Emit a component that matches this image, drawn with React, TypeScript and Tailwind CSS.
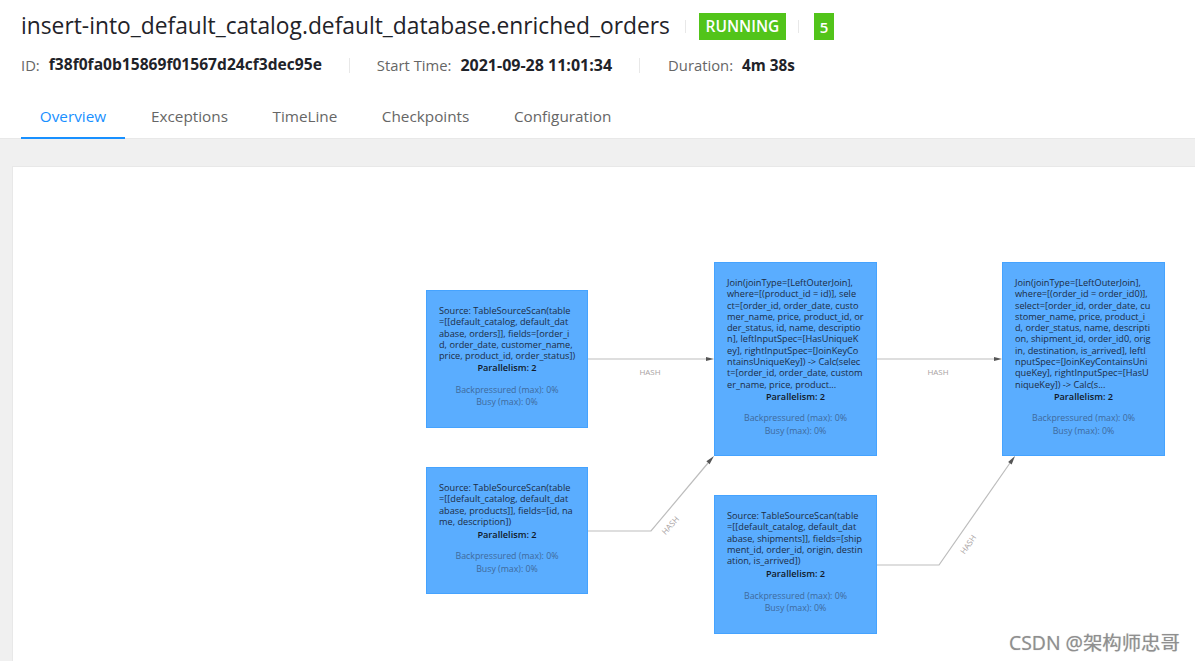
const font = { fontFamily: '"Open Sans", "Noto Sans CJK SC", sans-serif' };

type GraphNode = {
  left: number;
  top: number;
  width: number;
  height: number;
  extra: number;
  lines: string[];
};

// page coords minus canvas origin (13, 167)
const nodes: GraphNode[] = [
  {
    left: 413,
    top: 123,
    width: 162,
    height: 138,
    extra: 1,
    lines: [
      "Source: TableSourceScan(table",
      "=[[default_catalog, default_dat",
      "abase, orders]], fields=[order_i",
      "d, order_date, customer_name,",
      "price, product_id, order_status])",
    ],
  },
  {
    left: 413,
    top: 300,
    width: 162,
    height: 127,
    extra: 2,
    lines: [
      "Source: TableSourceScan(table",
      "=[[default_catalog, default_dat",
      "abase, products]], fields=[id, na",
      "me, description])",
    ],
  },
  {
    left: 701,
    top: 95,
    width: 163,
    height: 194,
    extra: 1,
    lines: [
      "Join(joinType=[LeftOuterJoin],",
      "where=[(product_id = id)], sele",
      "ct=[order_id, order_date, custo",
      "mer_name, price, product_id, or",
      "der_status, id, name, descriptio",
      "n], leftInputSpec=[HasUniqueK",
      "ey], rightInputSpec=[JoinKeyCo",
      "ntainsUniqueKey]) -> Calc(selec",
      "t=[order_id, order_date, custom",
      "er_name, price, product...",
    ],
  },
  {
    left: 701,
    top: 328,
    width: 163,
    height: 139,
    extra: 2,
    lines: [
      "Source: TableSourceScan(table",
      "=[[default_catalog, default_dat",
      "abase, shipments]], fields=[ship",
      "ment_id, order_id, origin, destin",
      "ation, is_arrived])",
    ],
  },
  {
    left: 989,
    top: 95,
    width: 163,
    height: 194,
    extra: 1,
    lines: [
      "Join(joinType=[LeftOuterJoin],",
      "where=[(order_id = order_id0)],",
      "select=[order_id, order_date, cu",
      "stomer_name, price, product_i",
      "d, order_status, name, descripti",
      "on, shipment_id, order_id0, orig",
      "in, destination, is_arrived], leftI",
      "nputSpec=[JoinKeyContainsUni",
      "queKey], rightInputSpec=[HasU",
      "niqueKey]) -> Calc(s...",
    ],
  },
];

function Node({ node }: { node: GraphNode }) {
  return (
    <div
      className="absolute border border-[#45a3ff] bg-[#5aadff] px-3 pt-[14px] text-[9.200px] leading-[11.300px] text-[#1c2c44]"
      style={{ left: node.left, top: node.top, width: node.width, height: node.height }}
    >
      {node.lines.map((line) => (
        <div key={line} className="whitespace-nowrap">
          {line}
        </div>
      ))}
      <div className="text-center font-semibold text-[#10192a]" style={{ marginTop: node.extra }}>
        Parallelism: 2
      </div>
      <div className="mt-[11px] text-center text-[8.800px] text-[#3f6a9c]">Backpressured (max): 0%</div>
      <div className="mt-[1px] text-center text-[8.800px] text-[#3f6a9c]">Busy (max): 0%</div>
    </div>
  );
}

function Edges() {
  return (
    <svg className="absolute left-0 top-0 h-[494px] w-[1182px]" fill="none">
      <g stroke="#bdbdbd" strokeWidth="1.200">
        <path d="M575 192H695" />
        <path d="M864 192H984" />
        <path d="M575 364H638L695 296" />
        <path d="M864 398H926L997 296" />
      </g>
      <g fill="#555">
        <path d="M693 190L701 192L693 194Z" />
        <path d="M981 190L989 192L981 194Z" />
        <path d="M701 289L696.600 297.200L693.400 294.200Z" />
        <path d="M1002 289L998.700 297.600L995.100 295.100Z" />
      </g>
      <g fill="#a8a2a2" fontSize="8" textAnchor="middle">
        <text x="637" y="208">HASH</text>
        <text x="925" y="208">HASH</text>
        <text x="658" y="361" transform="rotate(-48 658 359)">HASH</text>
        <text x="956" y="380" transform="rotate(-55 956 378)">HASH</text>
      </g>
    </svg>
  );
}

export default function App() {
  const tabs = ["Exceptions", "TimeLine", "Checkpoints", "Configuration"];

  return (
    <div className="relative flex h-[661px] w-[1195px] flex-col overflow-hidden bg-white" style={font}>
      <div className="flex h-[51px] items-center pl-[21px] pt-[1px]">
        <h1 className="text-[22.800px] leading-none text-[#1f2329]">
          insert-into_default_catalog.default_database.enriched_orders
        </h1>
        <span className="ml-[15px] h-[13px] w-px bg-[#e8e8e8]" />
        <span className="ml-[13px] flex h-[27px] w-[87px] items-center justify-center bg-[#52c41a] pt-[2px] text-[15.500px] font-semibold text-white">
          RUNNING
        </span>
        <span className="ml-[12px] h-[13px] w-px bg-[#e8e8e8]" />
        <span className="ml-[15px] flex h-[27px] w-[20px] items-center justify-center bg-[#52c41a] pt-[2px] text-[15px] font-semibold text-white">
          5
        </span>
      </div>

      <div className="mt-[3px] flex h-[22px] items-center pl-[21px] text-[14.800px] text-[#666]">
        <span>ID:</span>
        <span className="ml-[9px] text-[15.600px] font-bold text-[#1f2329]">f38f0fa0b15869f01567d24cf3dec95e</span>
        <span className="ml-[27px] h-[15px] w-px bg-[#e8e8e8]" />
        <span className="ml-[27px]">Start Time:</span>
        <span className="ml-[9px] text-[16px] font-bold text-[#1f2329]">2021-09-28 11:01:34</span>
        <span className="ml-[27px] h-[15px] w-px bg-[#e8e8e8]" />
        <span className="ml-[28px]">Duration:</span>
        <span className="ml-[9px] text-[15.300px] font-bold text-[#1f2329]">4m 38s</span>
      </div>

      <div className="mt-[19px] flex h-[44px] border-b border-[#e8e8e8] pl-[21px] text-[15.300px]">
        <div className="flex h-[44px] w-[104px] items-center justify-center border-b-2 border-[#1890ff] text-[#1890ff]">
          Overview
        </div>
        <div className="ml-[26px] flex gap-[44.500px] pt-[10px] text-[#666]">
          {tabs.map((tab) => (
            <span key={tab}>{tab}</span>
          ))}
        </div>
      </div>

      <div className="flex-1 bg-[#f0f0f0] pl-[12px] pt-[27px]">
        <div className="relative h-full border-l border-t border-[#e8e8e8] bg-white">
          <Edges />
          {nodes.map((node) => (
            <Node key={node.left + "-" + node.top} node={node} />
          ))}
        </div>
      </div>

      <div className="absolute left-[1009px] top-[628px] text-[19.400px] text-[#8f8f8f] [text-shadow:0_0_1px_#bbb]">
        CSDN @架构师忠哥
      </div>
    </div>
  );
}
